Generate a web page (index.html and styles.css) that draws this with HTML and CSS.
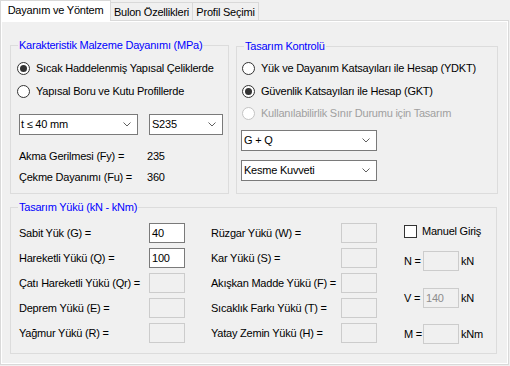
FILE: index.html
```html
<!DOCTYPE html>
<html lang="tr">
<head>
  <meta charset="UTF-8" />
  <title>Dayanım ve Yöntem</title>
  <link rel="stylesheet" href="styles.css">
</head>
<body>
  <div class="tabs">
    <div class="tab active">Dayanım ve Yöntem</div>
    <div class="tab tab-bulon">Bulon Özellikleri</div>
    <div class="tab tab-profil">Profil Seçimi</div>
  </div>
  <div class="page">
    <div class="top-row">
      <!-- Malzeme -->
      <div class="group material">
        <div class="group-title">Karakteristik Malzeme Dayanımı (MPa)</div>
        <div class="radio checked first"><span class="circle"></span>Sıcak Haddelenmiş Yapısal Çeliklerde</div>
        <div class="radio"><span class="circle"></span>Yapısal Boru ve Kutu Profillerde</div>
        <div class="combo-row">
          <div class="combo combo-t">t ≤ 40 mm<svg class="arrow" width="8" height="5" viewBox="0 0 8 5"><polyline points="0.5,0.5 4,4 7.5,0.5" fill="none" stroke="#606060" /></svg></div>
          <div class="combo combo-s">S235<svg class="arrow" width="8" height="5" viewBox="0 0 8 5"><polyline points="0.5,0.5 4,4 7.5,0.5" fill="none" stroke="#606060" /></svg></div>
        </div>
        <div class="value-row first"><span class="value-label">Akma Gerilmesi (Fy) =</span><span>235</span></div>
        <div class="value-row"><span class="value-label">Çekme Dayanımı (Fu) =</span><span>360</span></div>
      </div>
      <!-- Tasarım kontrolü -->
      <div class="group control">
        <div class="group-title">Tasarım Kontrolü</div>
        <div class="radio first"><span class="circle"></span>Yük ve Dayanım Katsayıları ile Hesap (YDKT)</div>
        <div class="radio checked"><span class="circle"></span>Güvenlik Katsayıları ile Hesap (GKT)</div>
        <div class="radio disabled"><span class="circle"></span>Kullanılabilirlik Sınır Durumu için Tasarım</div>
        <div class="combo combo-wide first">G + Q<svg class="arrow" width="8" height="5" viewBox="0 0 8 5"><polyline points="0.5,0.5 4,4 7.5,0.5" fill="none" stroke="#606060" /></svg></div>
        <div class="combo combo-wide">Kesme Kuvveti<svg class="arrow" width="8" height="5" viewBox="0 0 8 5"><polyline points="0.5,0.5 4,4 7.5,0.5" fill="none" stroke="#606060" /></svg></div>
      </div>
    </div>
    <!-- Yükler -->
    <div class="group loads">
      <div class="group-title">Tasarım Yükü (kN - kNm)</div>
      <div class="load-body">
        <div class="load-col">
          <div class="load-row"><span class="load-label">Sabit Yük (G) =</span><span class="box">40</span></div>
          <div class="load-row"><span class="load-label">Hareketli Yükü (Q) =</span><span class="box">100</span></div>
          <div class="load-row"><span class="load-label">Çatı Hareketli Yükü (Qr) =</span><span class="box off"></span></div>
          <div class="load-row"><span class="load-label">Deprem Yükü (E) =</span><span class="box off"></span></div>
          <div class="load-row"><span class="load-label">Yağmur Yükü (R) =</span><span class="box off"></span></div>
        </div>
        <div class="load-col col-2">
          <div class="load-row"><span class="load-label">Rüzgar Yükü (W) =</span><span class="box off"></span></div>
          <div class="load-row"><span class="load-label">Kar Yükü (S) =</span><span class="box off"></span></div>
          <div class="load-row"><span class="load-label">Akışkan Madde Yükü (F) =</span><span class="box off"></span></div>
          <div class="load-row"><span class="load-label">Sıcaklık Farkı Yükü (T) =</span><span class="box off"></span></div>
          <div class="load-row"><span class="load-label">Yatay Zemin Yükü (H) =</span><span class="box off"></span></div>
        </div>
        <div class="force-col">
          <div class="check-row"><span class="check"></span>Manuel Giriş</div>
          <div class="force-row row-n"><span class="force-label">N =</span><span class="box off"></span><span class="unit">kN</span></div>
          <div class="force-row row-v"><span class="force-label">V =</span><span class="box off">140</span><span class="unit">kN</span></div>
          <div class="force-row row-m"><span class="force-label">M =</span><span class="box off"></span><span class="unit">kNm</span></div>
        </div>
      </div>
    </div>
  </div>
</body>
</html>
```
FILE: styles.css
```css
* { box-sizing: border-box; margin: 0; padding: 0; }
body
{
  font-family: "Liberation Sans", Arial, sans-serif;
  font-size: 11px;
  line-height: 13px;
  letter-spacing: -0.22px;
  white-space: nowrap;
  color: #000;
  background: #f0f0f0;
  width: 510px;
  height: 366px;
  overflow: hidden;
}
/* tab strip */
.tabs
{
  display: flex;
  align-items: flex-end;
  height: 20px;
}
.tab
{
  height: 18px;
  border: 1px solid #d9d9d9;
  border-bottom: none;
  display: flex;
  align-items: center;
  justify-content: center;
  padding-top: 1px;
}
.tab.active
{
  position: relative;
  z-index: 1;
  width: 111px;
  height: 21px;
  margin-bottom: -1px;
  background: #fff;
  padding-top: 0;
  padding-bottom: 2px;
}
.tab-bulon { width: 83px; margin-left: -1px; }
.tab-profil { width: 67px; margin-left: -1px; }
/* tab page */
.page
{
  width: 509px;
  height: 345px;
  border: 1px solid #d9d9d9;
  box-shadow: inset 0 0 0 1px #fff;
  padding: 24px 0 0 9px;
}
.top-row
{
  display: flex;
  align-items: flex-start;
  gap: 7px;
}
.group
{
  border: 1px solid #dcdcdc;
  display: flex;
  flex-direction: column;
  align-items: flex-start;
}
.group-title
{
  margin: -7px 0 0 7px;
  padding: 0 1px;
  background: #f0f0f0;
  color: #0000ff;
}
.material { width: 219px; height: 149px; padding-left: 6px; }
.control { width: 262px; height: 148px; margin-top: 1px; padding-left: 5px; }
.control .group-title { margin-left: 2px; }
.material .group-title { margin-left: 1px; }
/* radio buttons */
.radio
{
  display: flex;
  align-items: center;
  height: 16px;
  margin-top: 7px;
}
.material .radio.first { margin-top: 8px; }
.control .radio.first { margin-top: 7px; }
.control .radio.disabled { margin-top: 6px; }
.circle
{
  width: 13px;
  height: 13px;
  border: 1px solid #333;
  border-radius: 50%;
  background: #fff;
  margin-right: 6px;
  display: flex;
  align-items: center;
  justify-content: center;
}
.radio.checked .circle::after
{
  content: "";
  width: 7px;
  height: 7px;
  border-radius: 50%;
  background: #333;
}
.radio.disabled { color: #a0a0a0; }
.radio.disabled .circle { border-color: #c4c4c4; }
/* combo boxes */
.combo-row
{
  display: flex;
  gap: 11px;
  margin: 15px 0 0 2px;
}
.combo
{
  height: 21px;
  border: 1px solid #7a7a7a;
  background: #fff;
  display: flex;
  align-items: center;
  justify-content: space-between;
  padding: 0 6px 0 1px;
}
.combo-t { width: 119px; }
.combo-s { width: 74px; padding-left: 2px; }
.combo-wide { width: 136px; margin: 9px 0 0 -1px; padding-left: 2px; }
.arrow { display: block; }
/* fixed values */
.value-row
{
  display: flex;
  margin: 8px 0 0 2px;
}
.value-row.first { margin-top: 15px; }
.value-label { width: 128px; }
/* load inputs */
.loads { width: 487px; height: 147px; margin-top: 13px; }
.load-body
{
  display: flex;
  margin-top: 9px;
  padding-left: 8px;
}
.load-col
{
  width: 166px;
  display: flex;
  flex-direction: column;
  gap: 5px;
}
.col-2 { margin-left: 26px; }
.load-row
{
  height: 20px;
  display: flex;
  align-items: center;
}
.load-label { flex: 1; }
.box
{
  width: 36px;
  height: 20px;
  border: 1px solid #7a7a7a;
  background: #fff;
  padding-left: 2px;
  display: flex;
  align-items: center;
}
.box.off
{
  border-color: #ccc;
  background: #f0f0f0;
  color: #8d8d8d;
}
.force-col
{
  margin-left: 27px;
  display: flex;
  flex-direction: column;
}
.check-row
{
  display: flex;
  align-items: center;
  height: 13px;
  margin-top: 2px;
}
.check
{
  width: 13px;
  height: 13px;
  border: 1px solid #333;
  background: #fff;
  margin-right: 5px;
}
.force-row
{
  display: flex;
  align-items: center;
  height: 20px;
}
.force-label { width: 19px; }
.unit { margin-left: 2px; }
.row-n { margin-top: 13px; }
.row-v { margin-top: 17px; }
.row-m { margin-top: 16px; }
```
